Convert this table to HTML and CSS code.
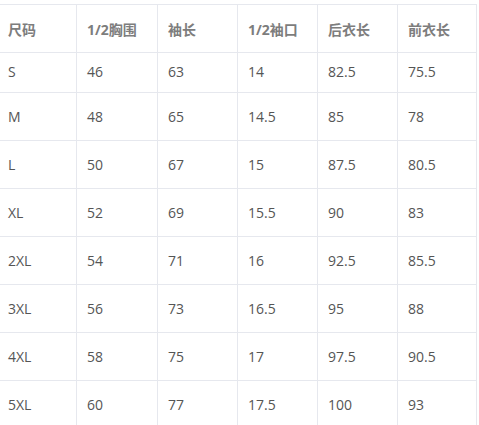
FILE: index.html
```html
<!DOCTYPE html>
<html lang="zh-CN">
<head>
<meta charset="utf-8">
<title>尺码表</title>
<link rel="stylesheet" href="styles.css">
</head>
<body>
<div class="size-table">
  <div class="row head"><div class="cell">尺码</div><div class="cell">1/2胸围</div><div class="cell">袖长</div><div class="cell">1/2袖口</div><div class="cell">后衣长</div><div class="cell">前衣长</div></div>
  <div class="row first"><div class="cell">S</div><div class="cell">46</div><div class="cell">63</div><div class="cell">14</div><div class="cell">82.5</div><div class="cell">75.5</div></div>
  <div class="row"><div class="cell">M</div><div class="cell">48</div><div class="cell">65</div><div class="cell">14.5</div><div class="cell">85</div><div class="cell">78</div></div>
  <div class="row"><div class="cell">L</div><div class="cell">50</div><div class="cell">67</div><div class="cell">15</div><div class="cell">87.5</div><div class="cell">80.5</div></div>
  <div class="row"><div class="cell">XL</div><div class="cell">52</div><div class="cell">69</div><div class="cell">15.5</div><div class="cell">90</div><div class="cell">83</div></div>
  <div class="row"><div class="cell">2XL</div><div class="cell">54</div><div class="cell">71</div><div class="cell">16</div><div class="cell">92.5</div><div class="cell">85.5</div></div>
  <div class="row"><div class="cell">3XL</div><div class="cell">56</div><div class="cell">73</div><div class="cell">16.5</div><div class="cell">95</div><div class="cell">88</div></div>
  <div class="row"><div class="cell">4XL</div><div class="cell">58</div><div class="cell">75</div><div class="cell">17</div><div class="cell">97.5</div><div class="cell">90.5</div></div>
  <div class="row"><div class="cell">5XL</div><div class="cell">60</div><div class="cell">77</div><div class="cell">17.5</div><div class="cell">100</div><div class="cell">93</div></div>
</div>
</body>
</html>
```
FILE: styles.css
```css
html, body {
  margin: 0;
  padding: 0;
  background: #ffffff;
}
body {
  font-family: "Open Sans", "Noto Sans CJK SC", sans-serif;
  font-size: 14px;
  color: #555555;
  overflow: hidden;
}
.size-table {
  margin-top: 4px;
  width: 477px;
  border-top: 1px solid #e6e8ee;
}
.row {
  display: grid;
  grid-template-columns: 77px 81px 80px 80px 80px 79px;
  height: 48px;
}
.row.first {
  height: 40px;
}
.cell {
  box-sizing: border-box;
  display: flex;
  align-items: center;
  padding-left: 10px;
  border-right: 1px solid #e6e8ee;
  border-bottom: 1px solid #e6e8ee;
  white-space: nowrap;
}
.cell:first-child {
  padding-left: 8px;
}
.row.first .cell {
  padding-bottom: 3px;
}
.head .cell {
  font-weight: bold;
  color: #7d7d7d;
}
```
